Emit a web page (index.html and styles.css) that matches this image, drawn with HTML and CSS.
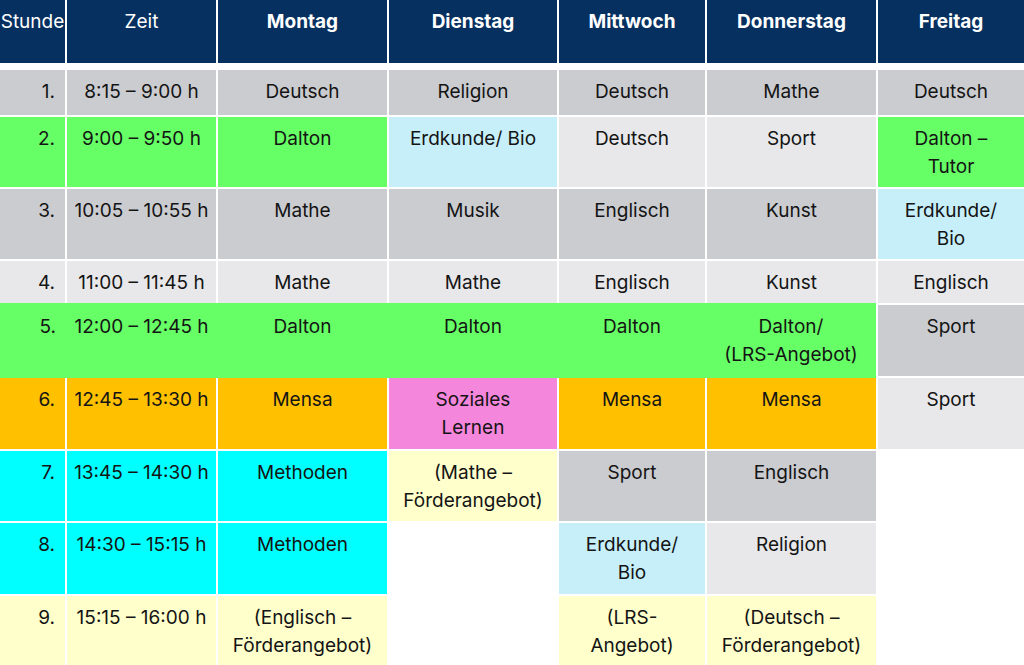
FILE: index.html
```html
<!DOCTYPE html>
<html lang="de">
<head>
<meta charset="utf-8">
<title>Stundenplan</title>
<link rel="stylesheet" href="styles.css">
</head>
<body>
<div class="plan">
  <div class="c h">Stunde</div>
  <div class="c h">Zeit</div>
  <div class="c h b">Montag</div>
  <div class="c h b">Dienstag</div>
  <div class="c h b">Mittwoch</div>
  <div class="c h b">Donnerstag</div>
  <div class="c h b">Freitag</div>

  <div class="c n dg">1.</div>
  <div class="c dg">8:15 – 9:00 h</div>
  <div class="c dg">Deutsch</div>
  <div class="c dg">Religion</div>
  <div class="c dg">Deutsch</div>
  <div class="c dg">Mathe</div>
  <div class="c dg">Deutsch</div>

  <div class="c n gr">2.</div>
  <div class="c gr">9:00 – 9:50 h</div>
  <div class="c gr">Dalton</div>
  <div class="c lb">Erdkunde/ Bio</div>
  <div class="c lg">Deutsch</div>
  <div class="c lg">Sport</div>
  <div class="c gr">Dalton –<br>Tutor</div>

  <div class="c n dg">3.</div>
  <div class="c dg">10:05 – 10:55 h</div>
  <div class="c dg">Mathe</div>
  <div class="c dg">Musik</div>
  <div class="c dg">Englisch</div>
  <div class="c dg">Kunst</div>
  <div class="c lb">Erdkunde/<br>Bio</div>

  <div class="c n lg">4.</div>
  <div class="c lg">11:00 – 11:45 h</div>
  <div class="c lg">Mathe</div>
  <div class="c lg">Mathe</div>
  <div class="c lg">Englisch</div>
  <div class="c lg">Kunst</div>
  <div class="c lg">Englisch</div>

  <div class="c n gr m first">5.</div>
  <div class="c gr m">12:00 – 12:45 h</div>
  <div class="c gr m">Dalton</div>
  <div class="c gr m">Dalton</div>
  <div class="c gr m">Dalton</div>
  <div class="c gr m last">Dalton/<br>(LRS-Angebot)</div>
  <div class="c dg">Sport</div>

  <div class="c n or">6.</div>
  <div class="c or">12:45 – 13:30 h</div>
  <div class="c or">Mensa</div>
  <div class="c pk">Soziales<br>Lernen</div>
  <div class="c or">Mensa</div>
  <div class="c or">Mensa</div>
  <div class="c lg">Sport</div>

  <div class="c n cy">7.</div>
  <div class="c cy">13:45 – 14:30 h</div>
  <div class="c cy">Methoden</div>
  <div class="c ye">(Mathe –<br>Förderangebot)</div>
  <div class="c dg">Sport</div>
  <div class="c dg">Englisch</div>
  <div class="c wh"></div>

  <div class="c n cy">8.</div>
  <div class="c cy">14:30 – 15:15 h</div>
  <div class="c cy">Methoden</div>
  <div class="c wh"></div>
  <div class="c lb">Erdkunde/<br>Bio</div>
  <div class="c lg">Religion</div>
  <div class="c wh"></div>

  <div class="c n ye">9.</div>
  <div class="c ye">15:15 – 16:00 h</div>
  <div class="c ye">(Englisch –<br>Förderangebot)</div>
  <div class="c wh"></div>
  <div class="c ye">(LRS-<br>Angebot)</div>
  <div class="c ye">(Deutsch –<br>Förderangebot)</div>
  <div class="c wh"></div>
</div>
</body>
</html>
```

FILE: styles.css
```css
html, body {
  margin: 0;
  padding: 0;
  background: #ffffff;
}

body {
  font-family: "Inter", "Noto Sans", "Liberation Sans", sans-serif;
  font-size: 19px;
  line-height: 28px;
  color: #141414;
  overflow: hidden;
  height: 665px;
}

.plan {
  display: grid;
  width: 1024px;
  grid-template-columns: 65px 149px 169px 168px 146px 169px 146px;
  grid-template-rows: 68px 45px 70px 70px 42px 71px 71px 70px 71px 71px;
  gap: 2px;
  background: #ffffff;
}

.c {
  display: flex;
  justify-content: center;
  align-items: flex-start;
  text-align: center;
  padding-top: 8px;
  white-space: nowrap;
  box-sizing: border-box;
  min-width: 0;
}

.h {
  background: #06305f;
  color: #ffffff;
  margin-bottom: 5px;
}

.b {
  font-weight: 700;
}

.n {
  justify-content: flex-end;
  padding-right: 10px;
}

.dg { background: #cbccd0; }
.lg { background: #e8e8ea; }
.gr { background: #66ff66; }
.lb { background: #c7effa; }
.or { background: #ffc000; }
.pk { background: #f487db; }
.cy { background: #00ffff; }
.ye { background: #ffffcc; }
.wh { background: #ffffff; }

.m {
  margin: -2px -1px -2px -1px;
  padding-top: 10px;
}

.m.first {
  margin-left: 0;
}

.m.last {
  margin-right: 0;
}
```
